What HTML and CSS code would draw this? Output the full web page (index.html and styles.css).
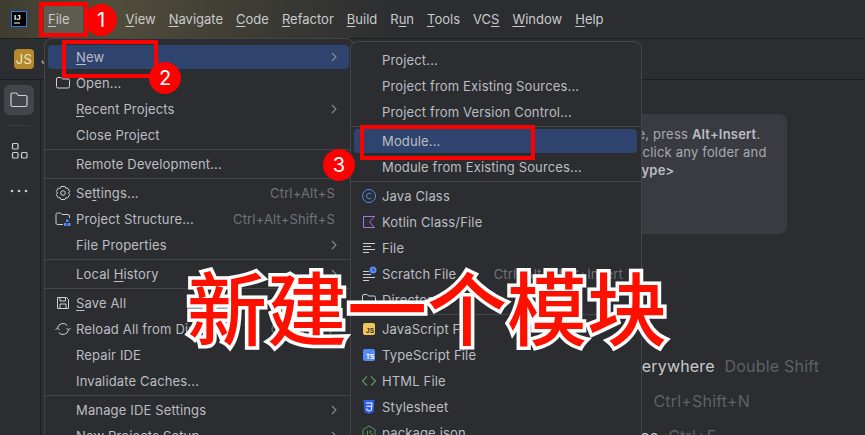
FILE: index.html
```html
<!DOCTYPE html>
<html lang="zh-CN">
<head>
  <meta charset="UTF-8">
  <meta name="viewport" content="width=device-width, initial-scale=1.0">
  <title>新建一个模块</title>
  <link rel="stylesheet" href="styles.css">
</head>
<body>
  <header class="titlebar">
    <svg class="logo" width="16" height="16" viewBox="0 0 16 16"><rect width="16" height="16" fill="#000"/><rect x=".5" y=".5" width="15" height="15" fill="none" stroke="#2f7bea"/><text x="3" y="9" class="logo-text">IJ</text><rect x="3" y="11.5" width="6" height="1" fill="#fff"/></svg>
    <nav class="mainmenu">
      <span class="mainmenu-item mainmenu-file"><u>F</u>ile</span>
      <span class="mainmenu-item"><u>V</u>iew</span>
      <span class="mainmenu-item"><u>N</u>avigate</span>
      <span class="mainmenu-item"><u>C</u>ode</span>
      <span class="mainmenu-item"><u>R</u>efactor</span>
      <span class="mainmenu-item"><u>B</u>uild</span>
      <span class="mainmenu-item">R<u>u</u>n</span>
      <span class="mainmenu-item"><u>T</u>ools</span>
      <span class="mainmenu-item">VC<u>S</u></span>
      <span class="mainmenu-item"><u>W</u>indow</span>
      <span class="mainmenu-item"><u>H</u>elp</span>
    </nav>
  </header>

  <div class="toolbar">
    <span class="project-badge">JS</span>
    <span class="project-name">JavaSE</span>
  </div>

  <div class="workspace">
    <aside class="sidebar">
      <span class="side-btn side-btn-active">
        <svg width="20" height="20" viewBox="0 0 20 20" fill="none" stroke="#ced0d6" stroke-width="1.2"><path d="M2 4.5A1.5 1.5 0 0 1 3.5 3h4l2 2.5h7A1.5 1.5 0 0 1 18 7v8a1.5 1.5 0 0 1-1.5 1.500h-13A1.5 1.5 0 0 1 2 15z"/></svg>
      </span>
      <span class="side-rule"></span>
      <span class="side-btn">
        <svg width="18" height="18" viewBox="0 0 18 18" fill="none" stroke="#ced0d6" stroke-width="1.2"><rect x="2.5" y="1.5" width="5.5" height="5.5" rx="1"/><rect x="2.5" y="10.5" width="5.5" height="5.5" rx="1"/><rect x="11.5" y="10.5" width="5.5" height="5.5" rx="1"/></svg>
      </span>
      <span class="side-btn side-dots">
        <svg width="18" height="6" viewBox="0 0 18 6" fill="#ced0d6"><circle cx="2" cy="3" r="1.3"/><circle cx="9" cy="3" r="1.3"/><circle cx="16" cy="3" r="1.3"/></svg>
      </span>
    </aside>

    <main class="editor">
      <div class="tip">
        To create a new file, press <b>Alt+Insert</b>.<br>
        Alternatively, right-click any folder and<br>
        select <b>New | &lt;file type&gt;</b>
      </div>
      <ul class="hints">
        <li>Search Everywhere <span>Double Shift</span></li>
        <li>Go to File <span>Ctrl+Shift+N</span></li>
        <li>Recent Files <span>Ctrl+E</span></li>
      </ul>
    </main>
  </div>

  <!-- File 菜单 -->
  <div class="menu menu-file">
    <div class="row row-active"><i class="ico"></i><span class="label"><u>N</u>ew</span><svg class="arrow" width="8" height="12" viewBox="0 0 8 12"><path d="M2 2l4 4-4 4"/></svg></div>
    <div class="row"><i class="ico"><svg width="16" height="16" viewBox="0 0 16 16" fill="none" stroke="#ced0d6"><path d="M1.5 4A1.5 1.5 0 0 1 3 2.5h3L7.5 4H13A1.5 1.5 0 0 1 14.5 5.5v6A1.5 1.5 0 0 1 13 13H3a1.5 1.5 0 0 1-1.5-1.5z"/></svg></i><span class="label">Open...</span></div>
    <div class="row"><i class="ico"></i><span class="label"><u>R</u>ecent Projects</span><svg class="arrow" width="8" height="12" viewBox="0 0 8 12"><path d="M2 2l4 4-4 4"/></svg></div>
    <div class="row"><i class="ico"></i><span class="label">Close Project</span></div>
    <hr class="sep">
    <div class="row"><i class="ico"></i><span class="label">Remote Development...</span></div>
    <hr class="sep">
    <div class="row"><i class="ico"><svg width="16" height="16" viewBox="0 0 16 16" fill="none" stroke="#ced0d6" stroke-linejoin="round"><path d="M6 1.5h4l.8 1.8 1.900-.2 2 3.400L13.500 8l1.200 1.500-2 3.400-1.900-.2-.8 1.800H6l-.8-1.800-1.900.2-2-3.400L2.500 8 1.300 6.500l2-3.400 1.900.2z"/><circle cx="8" cy="8" r="2.3"/></svg></i><span class="label">Se<u>t</u>tings...</span><span class="keys">Ctrl+Alt+S</span></div>
    <div class="row"><i class="ico"><svg width="16" height="16" viewBox="0 0 16 16" fill="none" stroke="#ced0d6"><path d="M8 13.5H2.5A1.5 1.5 0 0 1 1 12V3.5A1.5 1.5 0 0 1 2.5 2h3L7 3.500h6A1.5 1.5 0 0 1 14.5 5v2"/><rect x="11" y="8.5" width="2.5" height="2.5" fill="#548af7" stroke="none"/><rect x="9" y="12" width="2.5" height="3" fill="#548af7" stroke="none"/><rect x="12.5" y="12" width="3" height="3" fill="#548af7" stroke="none"/></svg></i><span class="label">Project Structure...</span><span class="keys">Ctrl+Alt+Shift+S</span></div>
    <div class="row"><i class="ico"></i><span class="label">File Properties</span><svg class="arrow" width="8" height="12" viewBox="0 0 8 12"><path d="M2 2l4 4-4 4"/></svg></div>
    <hr class="sep">
    <div class="row"><i class="ico"></i><span class="label">Local <u>H</u>istory</span><svg class="arrow" width="8" height="12" viewBox="0 0 8 12"><path d="M2 2l4 4-4 4"/></svg></div>
    <hr class="sep">
    <div class="row"><i class="ico"><svg width="16" height="16" viewBox="0 0 16 16" fill="none" stroke="#ced0d6"><path d="M2.5 2.5h9l2 2v9h-11z"/><path d="M5 2.5V6h5.500V2.500M5 13.500V9h6v4.500"/></svg></i><span class="label"><u>S</u>ave All</span></div>
    <div class="row"><i class="ico"><svg width="16" height="16" viewBox="0 0 16 16" fill="none" stroke="#ced0d6"><path d="M2.5 7A5.600 5.600 0 0 1 12.300 4.500M13.500 9A5.600 5.600 0 0 1 3.700 11.500"/><path d="M.5 9l2-2 2 2M15.500 7l-2 2-2-2"/></svg></i><span class="label">Reload All from Disk</span><span class="keys">Ctrl+Alt+Y</span></div>
    <div class="row"><i class="ico"></i><span class="label">Repair IDE</span></div>
    <div class="row"><i class="ico"></i><span class="label">Invalidate Caches...</span></div>
    <hr class="sep">
    <div class="row"><i class="ico"></i><span class="label">Manage IDE Settings</span><svg class="arrow" width="8" height="12" viewBox="0 0 8 12"><path d="M2 2l4 4-4 4"/></svg></div>
    <div class="row"><i class="ico"></i><span class="label">New Projects Setup</span><svg class="arrow" width="8" height="12" viewBox="0 0 8 12"><path d="M2 2l4 4-4 4"/></svg></div>
  </div>

  <!-- New 子菜单 -->
  <div class="menu menu-new">
    <div class="row"><i class="ico"></i><span class="label">Project...</span></div>
    <div class="row"><i class="ico"></i><span class="label">Project from Existing Sources...</span></div>
    <div class="row"><i class="ico"></i><span class="label">Project from Version Control...</span></div>
    <hr class="sep">
    <div class="row row-active"><i class="ico"></i><span class="label">Module...</span></div>
    <div class="row"><i class="ico"></i><span class="label">Module from Existing Sources...</span></div>
    <hr class="sep">
    <div class="row"><i class="ico"><svg width="16" height="16" viewBox="0 0 16 16" fill="none" stroke="#548af7"><circle cx="8" cy="8" r="6.500"/><path d="M10.300 6A2.800 2.800 0 1 0 10.300 10"/></svg></i><span class="label">Java Class</span></div>
    <div class="row"><i class="ico"><svg width="16" height="16" viewBox="0 0 16 16" fill="none" stroke="#a675e0"><path d="M2.500 2.500h11L8.500 8l5 5.500h-11z"/></svg></i><span class="label">Kotlin Class/File</span></div>
    <div class="row"><i class="ico"><svg width="16" height="16" viewBox="0 0 16 16" fill="none" stroke="#ced0d6"><path d="M2 3.500h12M2 6.500h8M2 9.500h12M2 12.500h6"/></svg></i><span class="label">File</span></div>
    <div class="row"><i class="ico"><svg width="16" height="16" viewBox="0 0 16 16" fill="none" stroke="#ced0d6"><path d="M2 5.500h6M2 8.500h8M2 11.500h12M2 14.500h6"/><circle cx="12" cy="4" r="3.500" fill="#548af7" stroke="none"/><path d="M12 2.500V4.300h1.500" stroke="#2b2d30" stroke-width=".8"/></svg></i><span class="label">Scratch File</span><span class="keys">Ctrl+Alt+Shift+Insert</span></div>
    <div class="row"><i class="ico"><svg width="16" height="16" viewBox="0 0 16 16" fill="none" stroke="#ced0d6"><path d="M1.500 4A1.500 1.500 0 0 1 3 2.500h3L7.500 4H13A1.500 1.500 0 0 1 14.500 5.500v6A1.500 1.500 0 0 1 13 13H3a1.500 1.500 0 0 1-1.500-1.500z"/></svg></i><span class="label">Directory</span></div>
    <hr class="sep">
    <div class="row"><i class="ico"><svg width="16" height="16" viewBox="0 0 16 16"><rect x="2" y="2" width="12" height="12" rx="2" fill="#f2c55c"/><text x="5" y="12" class="file-badge" fill="#2b2d30">JS</text></svg></i><span class="label">JavaScript File</span></div>
    <div class="row"><i class="ico"><svg width="16" height="16" viewBox="0 0 16 16"><rect x="2" y="2" width="12" height="12" rx="2" fill="#548af7"/><text x="5" y="12" class="file-badge" fill="#fff">TS</text></svg></i><span class="label">TypeScript File</span></div>
    <div class="row"><i class="ico"><svg width="16" height="16" viewBox="0 0 16 16" fill="none" stroke="#57965c" stroke-width="1.200"><path d="M6 3.500L1.500 8 6 12.500M10 3.500L14.500 8 10 12.500"/></svg></i><span class="label">HTML File</span></div>
    <div class="row"><i class="ico"><svg width="16" height="16" viewBox="0 0 16 16"><path d="M2.500 1h11l-1 12L8 15l-4.500-2z" fill="#2f5fe6"/><path d="M5 4h6l-.5 7L8 12l-2.200-1-.1-1.700M5.400 7.300h5" fill="none" stroke="#fff"/></svg></i><span class="label">Stylesheet</span></div>
    <div class="row"><i class="ico"><svg width="16" height="16" viewBox="0 0 16 16" fill="none" stroke="#57965c"><path d="M8 1l6 3.500v7L8 15l-6-3.500v-7z"/><path d="M6.500 5.500V11l-1 .5M11 6.500c-1-1-2.500-.7-2.500.5s2.700 1 2.700 2.400-1.800 1.500-2.800.6"/></svg></i><span class="label">package.json</span></div>
  </div>

  <!-- 标注 -->
  <span class="mark mark-file"></span>
  <span class="mark mark-new"></span>
  <span class="mark mark-module"></span>
  <span class="step step-1">1</span>
  <span class="step step-2">2</span>
  <span class="step step-3">3</span>
  <div class="banner">新建一个模块</div>
</body>
</html>
```

FILE: styles.css
```css
* {
  box-sizing: border-box;
}
html, body {
  height: 100%;
}
body {
  margin: 0;
  width: 865px;
  height: 435px;
  overflow: hidden;
  position: relative;
  display: flex;
  flex-direction: column;
  font-family: Inter, "Liberation Sans", sans-serif;
  font-size: 13px;
  color: #bcbec4;
  background: #2b2d30;
}
u {
  text-underline-offset: 2px;
}

.titlebar {
  height: 39px;
  flex: none;
  display: flex;
  align-items: center;
  padding-left: 11px;
  border-bottom: 1px solid #1e1f22;
  background: linear-gradient(90deg, #3f3d31, #514d3b 110px, #3c3b34 260px, #2b2d30 400px);
}
.logo {
  flex: none;
}
.logo-text {
  font: 700 8px "Liberation Sans", sans-serif;
  fill: #fff;
}
.mainmenu {
  display: flex;
  align-items: center;
  margin-left: 17px;
  gap: 13px;
}
.mainmenu-item {
  color: #c9cacd;
}
.mainmenu-file {
  margin-right: 30px;
  padding: 7px 13px 7px 4px;
  background: #5e5c4e;
}

.toolbar {
  height: 41px;
  flex: none;
  display: flex;
  align-items: center;
  gap: 7px;
  padding-left: 14px;
  border-bottom: 1px solid #1e1f22;
}
.project-badge {
  width: 20px;
  height: 20px;
  border-radius: 4px;
  background: #b5882a;
  color: #efe6cf;
  font-size: 13px;
  line-height: 20px;
  letter-spacing: .4px;
  text-align: center;
}

.workspace {
  flex: 1;
  min-height: 0;
  display: flex;
}
.sidebar {
  width: 41px;
  flex: none;
  display: flex;
  flex-direction: column;
  align-items: flex-start;
  padding: 5px 0 0 4px;
  border-right: 1px solid #1e1f22;
}
.side-btn {
  width: 30px;
  height: 30px;
  flex: none;
  display: flex;
  align-items: center;
  justify-content: center;
  border-radius: 6px;
}
.side-btn-active {
  background: #43454a;
}
.side-rule {
  width: 24px;
  height: 1px;
  margin: 10px 0 10px 3px;
  background: #393b40;
}
.side-dots {
  margin-top: 10px;
}

.editor {
  flex: 1;
  display: flex;
  flex-direction: column;
  padding-top: 34px;
}
.tip {
  flex: none;
  align-self: flex-end;
  width: 380px;
  height: 120px;
  margin-right: 78px;
  padding: 11px 0 0 114px;
  border-radius: 8px;
  background: #393b40;
  letter-spacing: .2px;
  line-height: 18px;
  white-space: nowrap;
  color: #a8aab0;
}
.tip b {
  font-weight: 600;
  color: #bcbec4;
}
.hints {
  list-style: none;
  margin: 0;
  padding: 0 0 0 523px;
  font-size: 16px;
  letter-spacing: .2px;
  color: #c9cacd;
}
.hints li {
  height: 35px;
  line-height: 35px;
  white-space: nowrap;
}
.hints li:first-child {
  margin-top: 115px;
}
.hints span {
  margin-left: 5px;
  color: #5f6166;
}
.hints li:nth-child(2) span {
  margin-left: 11px;
}

.menu {
  position: absolute;
  display: flex;
  flex-direction: column;
  gap: 2px;
  padding: 6px 0 0;
  border: 1px solid #43454a;
  border-bottom: 0;
  border-radius: 8px 8px 0 0;
  background: #2b2d30;
  letter-spacing: .15px;
  overflow: hidden;
}
.menu-file {
  left: 44px;
  top: 38px;
  width: 310px;
  height: 397px;
}
.menu-new {
  left: 350px;
  top: 41px;
  width: 292px;
  height: 394px;
}
.row {
  height: 24px;
  flex: none;
  display: flex;
  align-items: center;
  margin: 0 4px 0 3px;
  padding: 0 14px 0 7px;
  border-radius: 4px;
  white-space: nowrap;
}
.row-active {
  background: #2e436e;
}
.ico {
  width: 16px;
  height: 16px;
  flex: none;
  display: block;
  margin-right: 5px;
}
.ico svg {
  display: block;
}
.label {
  flex: 1;
}
.keys {
  color: #6f737a;
}
.arrow {
  margin-right: -3px;
  fill: none;
  stroke: #868a91;
  stroke-width: 1.1;
}
.sep {
  height: 1px;
  flex: none;
  width: 100%;
  margin: 0;
  border: 0;
  background: #43454a;
}
.file-badge {
  font: 700 6.5px "Liberation Sans", sans-serif;
}

.mark {
  position: absolute;
  border: 4px solid #fe0000;
}
.mark-file {
  left: 39px;
  top: 2px;
  width: 49px;
  height: 35px;
}
.mark-new {
  left: 62px;
  top: 40px;
  width: 96px;
  height: 38px;
}
.mark-module {
  left: 360px;
  top: 125px;
  width: 175px;
  height: 35px;
}
.step {
  position: absolute;
  width: 32px;
  height: 32px;
  border-radius: 50%;
  background: #fe0000;
  color: #fff;
  font-size: 20px;
  line-height: 32px;
  text-align: center;
}
.step-1 {
  left: 85px;
  top: 4px;
}
.step-2 {
  left: 149px;
  top: 62px;
}
.step-3 {
  left: 323px;
  top: 149px;
}
.banner {
  position: absolute;
  left: 187px;
  top: 259px;
  font-family: "Noto Sans CJK SC", sans-serif;
  font-size: 80px;
  font-weight: 500;
  line-height: 90px;
  white-space: nowrap;
  color: #fe1000;
  -webkit-text-stroke: 7px #fff;
  paint-order: stroke fill;
}
```
